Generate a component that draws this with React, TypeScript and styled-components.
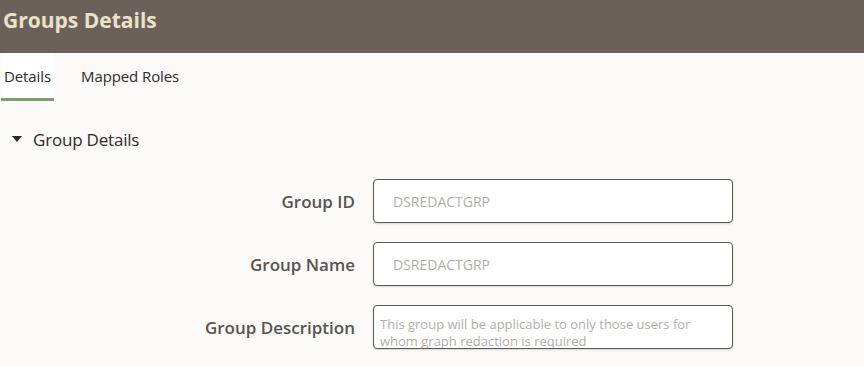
import React from 'react';
import styled, { createGlobalStyle } from 'styled-components';

const GlobalStyle = createGlobalStyle`
  body {
    margin: 0;
    background: #fbfaf8;
    font-family: "Open Sans", "Noto Sans", sans-serif;
  }
`;

const Page = styled.div`
  width: 864px;
  min-height: 366px;
  background: #fbfaf8;
  overflow: hidden;
`;

const Header = styled.header`
  height: 53px;
  background: #6b615a;
  padding: 5px 0 0 3px;
  box-sizing: border-box;
`;

const Title = styled.h1`
  margin: 0;
  font-size: 21px;
  line-height: 30px;
  font-weight: 700;
  color: #ebe2c8;
  letter-spacing: 0;
`;

const TabBar = styled.nav`
  display: flex;
  gap: 24px;
  padding-left: 1px;
  height: 48px;
`;

const Tab = styled.div<{ $active?: boolean }>`
  display: flex;
  align-items: center;
  padding: 0 3px;
  box-sizing: border-box;
  font-size: 15px;
  color: #2f2a27;
  background: ${(p) => (p.$active ? '#ffffff' : 'transparent')};
  border-bottom: 3px solid ${(p) => (p.$active ? '#77a06c' : 'transparent')};
  letter-spacing: -0.1px;
`;

const Section = styled.section`
  padding: 26px 0 0 12px;
`;

const SectionHeader = styled.div`
  display: flex;
  align-items: center;
  gap: 11px;
  font-size: 17px;
  color: #2f2a27;
  height: 24px;
  letter-spacing: -0.2px;
`;

const Caret = styled.span`
  width: 0;
  height: 0;
  border-left: 5px solid transparent;
  border-right: 5px solid transparent;
  border-top: 6px solid #2f2a27;
`;

const Form = styled.div`
  display: grid;
  grid-template-columns: 355px 360px;
  column-gap: 18px;
  row-gap: 19px;
  margin-top: 28px;
`;

const Label = styled.label`
  display: flex;
  align-items: center;
  justify-content: flex-end;
  font-size: 17px;
  font-weight: 600;
  color: #5a534e;
  letter-spacing: 0;
`;

const Input = styled.div`
  height: 44px;
  box-sizing: border-box;
  background: #ffffff;
  border: 1px solid #5e5853;
  border-radius: 4px;
  box-shadow: 0 1px 2px rgba(0, 0, 0, 0.15);
  display: flex;
  align-items: center;
  padding-left: 19px;
  font-size: 14px;
  color: #b3aeaa;
`;

const TextArea = styled(Input)`
  align-items: flex-start;
  padding: 10px 6px 0;
  font-size: 13px;
  line-height: 17px;
  overflow: hidden;
`;

const App: React.FC = () => {
  return (
    <Page>
      <GlobalStyle />
      <Header>
        <Title>Groups Details</Title>
      </Header>
      <TabBar>
        <Tab $active>Details</Tab>
        <Tab>Mapped Roles</Tab>
      </TabBar>
      <Section>
        <SectionHeader>
          <Caret />
          Group Details
        </SectionHeader>
      </Section>
      <Form>
        <Label>Group ID</Label>
        <Input>DSREDACTGRP</Input>
        <Label>Group Name</Label>
        <Input>DSREDACTGRP</Input>
        <Label>Group Description</Label>
        <TextArea>
          This group will be applicable to only those users for
          <br />
          whom graph redaction is required
        </TextArea>
      </Form>
    </Page>
  );
};

export default App;
